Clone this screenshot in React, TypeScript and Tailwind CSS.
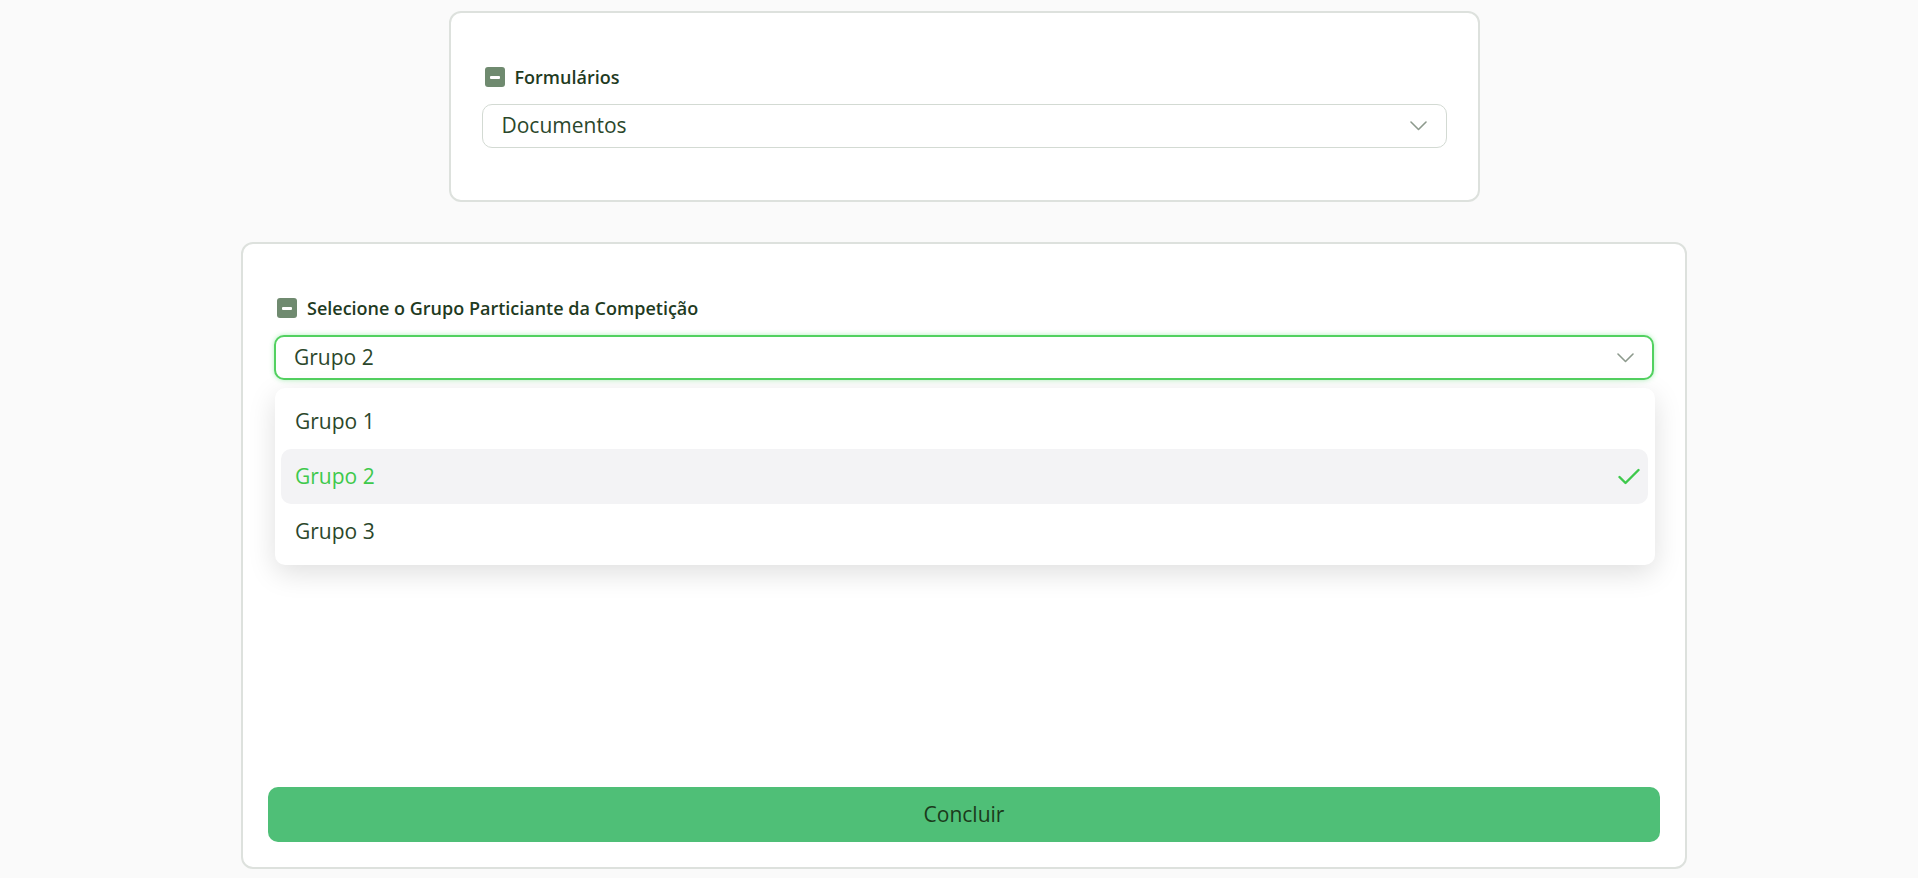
const font = { fontFamily: '"Open Sans", "Noto Sans", sans-serif' };

const grupos = ["Grupo 1", "Grupo 2", "Grupo 3"];

const SectionIcon = () => (
  <span className="flex h-5 w-5 shrink-0 items-center justify-center rounded-[3px] bg-[#6f8a6f]">
    <span className="h-[3px] w-[10px] rounded-[1px] bg-white"></span>
  </span>
);

const Chevron = () => (
  <svg width="17" height="10" viewBox="0 0 17 10" fill="none" className="shrink-0">
    <polyline points="1,1 8.5,8.5 16,1" stroke="#8d9a8d" strokeWidth="1.6" strokeLinecap="round" strokeLinejoin="round" />
  </svg>
);

const Check = () => (
  <svg width="22" height="17" viewBox="0 0 22 17" fill="none" className="shrink-0">
    <polyline points="1.5,9 7.5,15 20.5,2" stroke="#3ec94c" strokeWidth="2.4" strokeLinecap="round" strokeLinejoin="round" />
  </svg>
);

const Label = ({ children }: { children: string }) => (
  <div className="flex h-5 items-center gap-[10px] pl-[3px]">
    <SectionIcon />
    <span className="text-[18px] font-semibold leading-5 text-[#1f3b1f]">{children}</span>
  </div>
);

export default function App() {
  const selected = "Grupo 2";

  return (
    <div className="min-h-[878px] bg-[#fafafa] pt-[11px] pl-[10px]" style={font}>
      <div className="flex flex-col items-center gap-[40px]">
        {/* Formulários */}
        <div className="w-[1031px] rounded-xl border-2 border-[#dde1dd] bg-white px-[31px] pt-[54px] pb-[52px]">
          <Label>Formulários</Label>
          <div className="mt-[17px] flex h-[44px] items-center justify-between rounded-[10px] border border-[#d3dad3] bg-white pr-[19px] pl-[19px]">
            <span className="text-[21px] text-[#2b472b]">Documentos</span>
            <Chevron />
          </div>
        </div>

        {/* Grupo */}
        <div className="flex h-[627px] w-[1446px] flex-col rounded-xl border-2 border-[#dde1dd] bg-white p-[25px] pt-[54px]">
          <div className="px-[6px]">
            <Label>Selecione o Grupo Particiante da Competição</Label>
            <div className="relative mt-[17px]">
              <div className="flex h-[45px] items-center justify-between rounded-[10px] border-2 border-[#52d160] bg-white pr-[18px] pl-[18px] shadow-[0_0_5px_rgba(74,222,100,0.45)]">
                <span className="text-[21px] text-[#2b472b]">{selected}</span>
                <Chevron />
              </div>
              <div className="absolute top-[53px] right-[-1px] left-[1px] z-10 rounded-[10px] bg-white p-[6px] pr-[7px] shadow-[0_8px_28px_rgba(0,0,0,0.13)]">
                {grupos.map((g) => (
                  <div
                    key={g}
                    className={
                      g === selected
                        ? "flex h-[55px] items-center justify-between rounded-[10px] bg-[#f3f3f5] pr-[8px] pl-[14px]"
                        : "flex h-[55px] items-center justify-between rounded-[10px] pr-[8px] pl-[14px]"
                    }
                  >
                    <span className={g === selected ? "text-[21px] text-[#3ec94c]" : "text-[21px] text-[#2b472b]"}>{g}</span>
                    {g === selected && <Check />}
                  </div>
                ))}
              </div>
            </div>
          </div>
          <button className="mt-auto flex h-[55px] w-full items-center justify-center rounded-[10px] bg-[#4fbf77] text-[21px] text-[#1b3a1b]">
            Concluir
          </button>
        </div>
      </div>
    </div>
  );
}
